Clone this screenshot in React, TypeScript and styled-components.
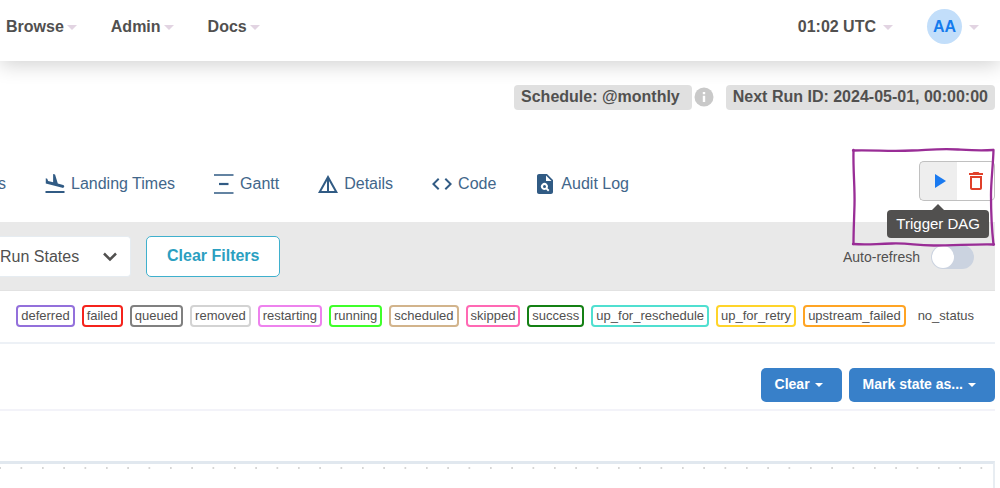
import React from "react";
import styled, { createGlobalStyle } from "styled-components";
import { MdFlightLand, MdCode, MdPlagiarism, MdPlayArrow, MdDeleteOutline } from "react-icons/md";

const GlobalStyle = createGlobalStyle`
  *, *::before, *::after { box-sizing: border-box; }
  body {
    margin: 0;
    background: #fff;
    color: #51504f;
    font-family: "Liberation Sans", Arial, sans-serif;
    font-size: 16px;
    line-height: 20px;
  }
  button, input, select { font: inherit; color: inherit; margin: 0; }
`;

const Page = styled.div`
  display: flex;
  flex-direction: column;
  min-height: 100vh;
  overflow-x: hidden;
`;

const Header = styled.header`
  display: flex;
  align-items: center;
  justify-content: space-between;
  height: 61px;
  padding: 0 21px 8px 6px;
  box-shadow: 0 4px 20px rgba(0, 0, 0, 0.18);
`;

const HeaderGroup = styled.nav`
  display: flex;
  align-items: center;
  gap: 34px;
`;

const MenuButton = styled.button<{ $gap: number }>`
  display: flex;
  align-items: center;
  gap: ${(p) => p.$gap}px;
  padding: 0;
  border: 0;
  background: none;
  font-weight: bold;
  white-space: nowrap;
`;

const Caret = styled.span<{ $size: number; $color: string }>`
  border: ${(p) => p.$size}px solid transparent;
  border-top-color: ${(p) => p.$color};
  border-bottom: 0;
  margin-top: 2px;
`;

const Avatar = styled.span`
  display: grid;
  place-items: center;
  width: 35px;
  height: 35px;
  border-radius: 50%;
  background: #c2defa;
  color: #157bed;
`;

const Main = styled.main`
  display: flex;
  flex-direction: column;
  flex: 1;
  padding-right: 5px;
`;

const RunInfo = styled.div`
  display: flex;
  justify-content: flex-end;
  align-items: center;
  padding-top: 24px;
`;

const Badge = styled.span<{ $end: number }>`
  padding: 2px ${(p) => p.$end}px 3px 7px;
  border-radius: 4px;
  background: #e0e0e0;
  font-weight: bold;
  white-space: nowrap;
`;

const InfoIcon = styled.svg`
  width: 20px;
  height: 20px;
  margin: 0 12px 2px 2px;
`;

const TabBar = styled.div`
  display: flex;
  align-items: center;
  justify-content: space-between;
  padding: 51px 0 21px;
`;

const Tabs = styled.nav`
  display: flex;
  gap: 37px;
  margin-left: -2px;
  padding-top: 5px;
`;

const Tab = styled.a`
  display: flex;
  align-items: center;
  gap: 4px;
  color: #42668a;
  text-decoration: none;
  white-space: nowrap;

  svg { width: 24px; height: 24px; color: #315b84; }
`;

const Actions = styled.div`
  position: relative;
  display: flex;
`;

const ActionButton = styled.button<{ $active?: boolean }>`
  display: grid;
  place-items: center;
  width: 38px;
  height: 40px;
  padding: 0;
  border: 1px solid #c0c0c0;
  background: ${(p) => (p.$active ? "#eeeeee" : "#fff")};
  color: ${(p) => (p.$active ? "#1a7af0" : "#e0402a")};

  &:first-child { border-right: 0; border-radius: 5px 0 0 5px; }
  &:nth-child(2) { border-left: 0; border-radius: 0 5px 5px 0; }
  svg { width: 24px; height: 24px; }
`;

const Tooltip = styled.span`
  position: absolute;
  z-index: 1;
  top: 49px;
  right: 6px;
  padding: 4px 9px;
  border-radius: 4px;
  background: #51504f;
  color: #fff;
  font-size: 15px;
  white-space: nowrap;

  &::before {
    content: "";
    position: absolute;
    left: 45px;
    bottom: 100%;
    border: 6px solid transparent;
    border-bottom-color: #51504f;
    border-top: 0;
  }
`;

const Highlight = styled.svg`
  position: absolute;
  z-index: 2;
  top: -14px;
  right: -1px;
  width: 146px;
  height: 100px;
  pointer-events: none;
`;

const FilterBar = styled.div`
  display: flex;
  align-items: center;
  gap: 15px;
  padding: 14px 21px 13px 0;
  background: #e9e9e9;
  border-bottom: 1px solid #e2e2e2;
`;

const SelectBox = styled.div`
  position: relative;
  width: 131px;

  svg {
    position: absolute;
    right: 14px;
    top: 16px;
    width: 14px;
    height: 10px;
    pointer-events: none;
  }
`;

const Select = styled.select`
  display: block;
  appearance: none;
  width: 100%;
  height: 41px;
  padding: 0;
  border: 1px solid #e6ecf1;
  border-left: 0;
  border-radius: 0 4px 4px 0;
  background: #fff;
`;

const OutlineButton = styled.button`
  height: 41px;
  padding: 0 20px 2px;
  border: 1px solid #3fb0cd;
  border-radius: 5px;
  background: #fff;
  color: #2b9fc1;
  font-weight: bold;
`;

const Toggle = styled.label`
  display: flex;
  align-items: center;
  gap: 11px;
  margin-left: auto;
  font-size: 14px;
`;

const Switch = styled.input`
  appearance: none;
  width: 43px;
  height: 24px;
  padding: 1px;
  border-radius: 12px;
  background: #cbd3e0;

  &::before {
    content: "";
    display: block;
    width: 22px;
    height: 22px;
    border-radius: 50%;
    background: #fff;
  }
  &:checked::before { margin-left: auto; }
`;

const Legend = styled.div`
  display: flex;
  justify-content: flex-end;
  gap: 7px;
  padding: 14px 16px 15px;
  border-bottom: 2px solid #edf1f6;
`;

const State = styled.span<{ $color: string }>`
  padding: 0 3px;
  border: 2px solid ${(p) => p.$color};
  border-radius: 4px;
  font-size: 13px;
  line-height: 18px;
  white-space: nowrap;
`;

const BulkActions = styled.div`
  display: flex;
  justify-content: flex-end;
  gap: 7px;
  padding: 24px 0 7px;
  border-bottom: 2px solid #f3f3f9;
`;

const PrimaryButton = styled.button`
  display: flex;
  align-items: center;
  gap: 5px;
  height: 34px;
  padding: 0 19px 2px 14px;
  border: 0;
  border-radius: 5px;
  background: #3880c9;
  color: #fff;
  font-size: 14px;
  font-weight: bold;
  white-space: nowrap;
`;

const Graph = styled.section`
  flex: 1;
  display: flex;
  margin-top: 50px;
  border-top: 3px solid #e1e8ef;
  border-right: 2px solid #e8edf2;

  svg { width: 100%; height: 24px; }
`;

const STATES = [
  ["deferred", "#9370db"],
  ["failed", "#f5231c"],
  ["queued", "#808080"],
  ["removed", "#d3d3d3"],
  ["restarting", "#ee82ee"],
  ["running", "#3fff2a"],
  ["scheduled", "#d2b48c"],
  ["skipped", "#ff69b4"],
  ["success", "#148014"],
  ["up_for_reschedule", "#50dfd0"],
  ["up_for_retry", "#ffd42a"],
  ["upstream_failed", "#ffa424"],
  ["no_status", "transparent"],
];

const GanttIcon = () => (
  <svg viewBox="0 0 24 24" fill="none" stroke="currentColor" aria-hidden="true">
    <path d="M2 3h19.500M2 21h19.500" strokeWidth="1.700" />
    <path d="M7 12h9.500" strokeWidth="2.200" />
  </svg>
);

const DetailsIcon = () => (
  <svg viewBox="0 0 24 24" fill="currentColor" aria-hidden="true">
    <path d="M12 3 2 21h20L12 3zm1 5.920L18.600 19H13V8.920zm-2 0V19H5.400L11 8.920z" />
  </svg>
);

const NAV = ["Browse", "Admin", "Docs"];

export default function App() {
  return (
    <Page>
      <GlobalStyle />
      <Header>
        <HeaderGroup>
          {NAV.map((name) => (
            <MenuButton key={name} $gap={3} type="button">
              {name}
              <Caret $size={5} $color="#e2d4e2" />
            </MenuButton>
          ))}
        </HeaderGroup>
        <HeaderGroup>
          <MenuButton $gap={7} type="button">
            01:02 UTC
            <Caret $size={5} $color="#e2d4e2" />
          </MenuButton>
          <MenuButton $gap={7} type="button">
            <Avatar>AA</Avatar>
            <Caret $size={5} $color="#e2d4e2" />
          </MenuButton>
        </HeaderGroup>
      </Header>
      <Main>
        <RunInfo>
          <Badge $end={12}>Schedule: @monthly</Badge>
          <InfoIcon viewBox="0 0 20 20" aria-hidden="true">
            <circle cx="10" cy="10" r="9.500" fill="#c9c9c9" />
            <path d="M8.800 5h2.400v2.200H8.800zM8.800 8.700h2.400V15H8.800z" fill="#fff" />
          </InfoIcon>
          <Badge $end={7}>Next Run ID: 2024-05-01, 00:00:00</Badge>
        </RunInfo>
        <TabBar>
          <Tabs>
            <Tab href="#s">s</Tab>
            <Tab href="#landing"><MdFlightLand />Landing Times</Tab>
            <Tab href="#gantt"><GanttIcon />Gantt</Tab>
            <Tab href="#details"><DetailsIcon />Details</Tab>
            <Tab href="#code"><MdCode />Code</Tab>
            <Tab href="#audit"><MdPlagiarism />Audit Log</Tab>
          </Tabs>
          <Actions>
            <ActionButton $active type="button" aria-label="Trigger DAG"><MdPlayArrow /></ActionButton>
            <ActionButton type="button" aria-label="Delete DAG"><MdDeleteOutline /></ActionButton>
            <Tooltip role="tooltip">Trigger DAG</Tooltip>
            <Highlight viewBox="0 0 146 100" fill="none" stroke="#992d96" strokeWidth="2.300" strokeLinecap="round" aria-hidden="true">
              <path d="M3 3.500C25 3 40 4.500 62 3.500S92 1.500 108 2.500S130 4 143 3" />
              <path d="M143.500 3C143 20 141 34 141 48S141.500 80 143.500 97.500" />
              <path d="M144 97.500C125 97 105 98.500 84 98.500S62 96 42 96.500S18 98 3 97" />
              <path d="M3.500 3C3 24 5 40 4.500 58S3.500 84 3.500 97" />
            </Highlight>
          </Actions>
        </TabBar>
        <FilterBar>
          <SelectBox>
            <Select aria-label="Run States" defaultValue="all">
              <option value="all">Run States</option>
            </Select>
            <svg viewBox="0 0 14 10" fill="none" stroke="#51504f" strokeWidth="2.500" aria-hidden="true">
              <path d="M1 1.500l6 6 6-6" />
            </svg>
          </SelectBox>
          <OutlineButton type="button">Clear Filters</OutlineButton>
          <Toggle>
            Auto-refresh
            <Switch type="checkbox" role="switch" />
          </Toggle>
        </FilterBar>
        <Legend>
          {STATES.map(([name, color]) => (
            <State key={name} $color={color}>{name}</State>
          ))}
        </Legend>
        <BulkActions>
          <PrimaryButton type="button">Clear<Caret $size={4} $color="#fff" /></PrimaryButton>
          <PrimaryButton type="button">Mark state as...<Caret $size={4} $color="#fff" /></PrimaryButton>
        </BulkActions>
        <Graph aria-label="Graph">
          <svg aria-hidden="true">
            <defs>
              <pattern id="dots" width="64" height="21" patternUnits="userSpaceOnUse">
                <path d="M0 4h1M20.500 4h1.700M42 4h1.700M63.200 4h.8" stroke="#c8c8c8" strokeWidth="1.700" />
              </pattern>
            </defs>
            <rect width="100%" height="100%" fill="url(#dots)" />
          </svg>
        </Graph>
      </Main>
    </Page>
  );
}
